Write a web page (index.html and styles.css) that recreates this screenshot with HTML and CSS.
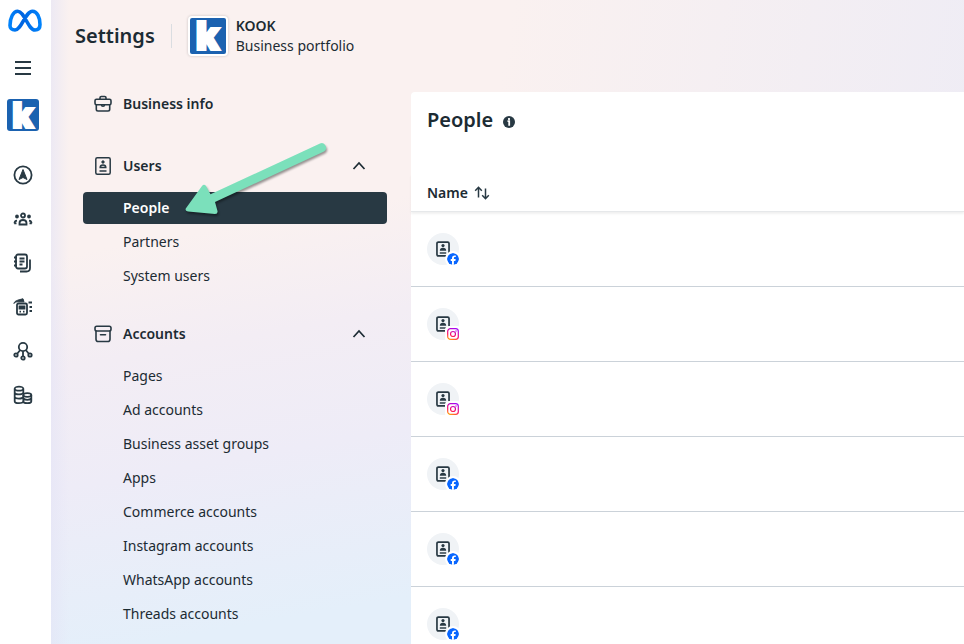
FILE: index.html
```html
<!DOCTYPE html>
<html lang="en">

<head>
    <meta charset="UTF-8">
    <meta name="viewport" content="width=device-width, initial-scale=1.0">
    <title>Settings - People</title>
    <link rel="stylesheet" href="styles.css">
</head>

<body>
    <!-- shared icons -->
    <svg class="sprite" aria-hidden="true">
        <symbol id="chevron" viewBox="0 0 14 10">
            <path d="M1.500 8 7 2l5.500 6" fill="none" stroke="#1c2b33" stroke-width="1.700" />
        </symbol>
        <symbol id="badge" viewBox="0 0 16 18">
            <rect x="1.200" y="1.200" width="13.600" height="15.600" rx="1.500" fill="none" stroke="currentColor" stroke-width="1.900" />
            <circle cx="8" cy="5.200" r="1.800" fill="currentColor" />
            <path d="M4.400 11c0-2.300 1.300-3.400 3.600-3.400s3.600 1.100 3.600 3.400z" fill="currentColor" />
            <path d="M4.400 13.500h7.200" stroke="currentColor" stroke-width="1.600" />
        </symbol>
        <symbol id="facebook" viewBox="0 0 12 12">
            <circle cx="6" cy="6" r="6" fill="#0866ff" />
            <path d="M5 12V7.900H3.700V6.100H5V5.300c0-2 .9-2.900 2.700-2.900.4 0 .8.050 1.100.1v1.600h-.7c-.9 0-1.200.4-1.200 1.200v.8h1.800l-.3 1.800H6.900V12z" fill="#fff" />
        </symbol>
        <symbol id="instagram" viewBox="0 0 12 12">
            <rect x=".7" y=".7" width="10.600" height="10.600" rx="2.600" fill="none" stroke="url(#insta)" stroke-width="1.200" />
            <circle cx="6" cy="6" r="2.500" fill="none" stroke="url(#insta)" stroke-width="1.200" />
            <circle cx="9" cy="3" r=".7" fill="#c013d8" />
        </symbol>
        <linearGradient id="insta" gradientUnits="userSpaceOnUse" x1="2" y1="12" x2="7" y2="0">
            <stop offset="0" stop-color="#ffb800" />
            <stop offset=".4" stop-color="#ff0f5f" />
            <stop offset="1" stop-color="#a307f5" />
        </linearGradient>
    </svg>

    <div class="app">
        <nav class="rail" aria-label="Main">
            <a href="#" class="meta-logo" aria-label="Meta">
                <svg width="34" height="24" viewBox="0 0 34 24">
                    <defs>
                        <linearGradient id="meta">
                            <stop offset="0" stop-color="#0082fb" />
                            <stop offset=".4" stop-color="#0064e0" />
                            <stop offset="1" stop-color="#0082fb" />
                        </linearGradient>
                    </defs>
                    <path d="M2 16.500C2 9 5.200 2.200 9.700 2.200 16.500 2.200 20 21 27 21c3.500 0 5-2.300 5-5.500 0-7.300-3-13.300-7.500-13.300C17.500 2.200 13.500 21 7 21c-3.300 0-5-1.700-5-4.500z" fill="none" stroke="url(#meta)" stroke-width="3.600" />
                </svg>
            </a>
            <button class="menu" aria-label="Menu">
                <svg width="18" height="16" viewBox="0 0 18 16">
                    <path d="M1 2h16M1 8h16M1 14h16" stroke="#283943" stroke-width="2" />
                </svg>
            </button>
            <a href="#" class="logo rail-logo" aria-label="KOOK">k</a>
            <div class="rail-links">
                <a href="#" aria-label="Ads">
                    <svg viewBox="0 0 20 20">
                        <circle cx="10" cy="10" r="8.600" />
                        <path class="fill" d="M10 4.500 14 14.500 10 12.500 6 14.500z" stroke-width="1" />
                    </svg>
                </a>
                <a href="#" aria-label="Audiences">
                    <svg viewBox="0 0 20 20">
                        <circle cx="10" cy="6.500" r="2" />
                        <path d="M6.500 15.500v-1.500c0-2 1.300-3 3.500-3s3.500 1 3.500 3v1.500z" />
                        <circle class="fill" cx="4" cy="7.500" r="1" />
                        <circle class="fill" cx="16" cy="7.500" r="1" />
                        <path d="M1.500 14.300c0-1.600.8-2.500 2.500-2.700M18.500 14.300c0-1.600-.8-2.500-2.500-2.700M1.200 14.300h2.300M16.500 14.300h2.300" />
                    </svg>
                </a>
                <a href="#" aria-label="Posts">
                    <svg viewBox="0 0 20 20">
                        <rect x="3" y="1.500" width="11" height="14" rx="2" />
                        <path d="M1 4.500h3M1 8.500h3M1 12.500h3M6.500 5.500h5M6.500 8.500h5M6.500 11.500h3" />
                        <path d="M17 6.500v8.500c0 2.200-1.200 3.500-3.500 3.500H7" />
                    </svg>
                </a>
                <a href="#" aria-label="Catalog">
                    <svg viewBox="0 0 20 20">
                        <rect x="4" y="6.500" width="10" height="11" rx="1.500" />
                        <path d="M6.500 9.500h5v2h-5zM6.500 14.700h1.500M10 14.700h1.500M15.500 5.500h3.500M16.500 10h2.500M16.500 14h2.500" />
                        <path class="fill" d="M1 6.500C1.500 4 4 3.200 10 1.800l1 3H5.500C3 4.800 2 5 1 6.500z" stroke-width="1" />
                    </svg>
                </a>
                <a href="#" aria-label="Connections">
                    <svg viewBox="0 0 20 20">
                        <circle cx="10" cy="6" r="4.200" />
                        <circle cx="3" cy="14" r="1.700" />
                        <circle cx="10" cy="17" r="1.700" />
                        <circle cx="17" cy="14" r="1.700" />
                        <path d="M10 10.200v5M7 9.300l-2.800 3.500M13 9.300l2.800 3.500" />
                    </svg>
                </a>
                <a href="#" aria-label="Billing">
                    <svg viewBox="0 0 20 20">
                        <ellipse cx="6" cy="3.700" rx="4.300" ry="2" />
                        <path d="M1.700 3.700v12.500c0 1.500 2.200 2 4.300 2s4.300-.5 4.300-2M10.300 3.700v5M1.700 7.800c1 2.200 7.500 2.200 8.600 0M1.700 12c1 2.200 7.500 2.200 8.600 0" />
                        <ellipse cx="14.300" cy="10" rx="4" ry="1.800" />
                        <path d="M10.300 10v6.200c0 1.500 2 2 4 2s4-.5 4-2V10M10.300 13.200c1 2.200 7 2.200 8 0" />
                    </svg>
                </a>
            </div>
        </nav>

        <div class="page">
            <header class="topbar">
                <h1>Settings</h1>
                <div class="portfolio">
                    <div class="logo portfolio-logo" aria-hidden="true">k</div>
                    <div>
                        <strong>KOOK</strong>
                        <span>Business portfolio</span>
                    </div>
                </div>
            </header>

            <div class="content">
                <nav class="sidebar" aria-label="Settings">
                    <a href="#" class="heading">
                        <svg width="18" height="18" viewBox="0 0 18 18" fill="none" stroke="#283943" stroke-width="1.600">
                            <rect x="1" y="4.200" width="16" height="5.500" rx="1.500" />
                            <path d="M2.300 10v4.300c0 1.200.6 1.700 1.700 1.700h10c1.100 0 1.700-.5 1.700-1.700V10M6 4V2.800c0-.9.4-1.300 1.300-1.300h3.400c.9 0 1.300.4 1.300 1.300V4M7.500 9.800c0 2 3 2 3 0" />
                        </svg>
                        Business info
                    </a>

                    <section>
                        <button class="heading" aria-expanded="true">
                            <svg width="18" height="18" viewBox="0 0 18 18" fill="none" stroke="#283943" stroke-width="1.500">
                                <rect x="1.800" y=".8" width="14.400" height="16.400" rx="1.500" />
                                <circle cx="9" cy="5" r="1.200" fill="#283943" stroke-width="1" />
                                <path d="M6.200 10.500c0-1.800 1-2.500 2.800-2.500s2.800.7 2.800 2.500zM5.500 14h7" />
                            </svg>
                            Users
                            <svg class="chevron" width="14" height="10"><use href="#chevron" /></svg>
                        </button>
                        <ul>
                            <li class="active">
                                <a href="#">People</a>
                                <svg class="arrow" width="150" height="80" viewBox="0 0 150 80">
                                    <path d="M137 3.500a4.500 4.500 0 0 1 4 8L32 62 34.500 71q.5 3-2.500 3L5 71.500q-4-1-1.500-4L19 46q2-2.500 4 0l4.500 8.300z" fill="#7be0bb" />
                                </svg>
                            </li>
                            <li><a href="#">Partners</a></li>
                            <li><a href="#">System users</a></li>
                        </ul>
                    </section>

                    <section>
                        <button class="heading" aria-expanded="true">
                            <svg width="18" height="18" viewBox="0 0 18 18" fill="none" stroke="#283943" stroke-width="1.600">
                                <rect x="1" y="1.200" width="16" height="4.800" rx="1.700" />
                                <path d="M2 6v8.200c0 1.600.8 2.300 2.300 2.300h9.400c1.500 0 2.300-.7 2.300-2.300V6M6.500 9.700h5" stroke-linecap="round" />
                            </svg>
                            Accounts
                            <svg class="chevron" width="14" height="10"><use href="#chevron" /></svg>
                        </button>
                        <ul>
                            <li><a href="#">Pages</a></li>
                            <li><a href="#">Ad accounts</a></li>
                            <li><a href="#">Business asset groups</a></li>
                            <li><a href="#">Apps</a></li>
                            <li><a href="#">Commerce accounts</a></li>
                            <li><a href="#">Instagram accounts</a></li>
                            <li><a href="#">WhatsApp accounts</a></li>
                            <li><a href="#">Threads accounts</a></li>
                        </ul>
                    </section>
                </nav>

                <main class="panel">
                    <div class="panel-title">
                        <h2>People</h2>
                        <svg width="12" height="12" viewBox="0 0 12 12" role="img" aria-label="Information">
                            <circle cx="6" cy="6" r="6" fill="#283943" />
                            <path d="M4.500 5.200h1.700v4.600M6 2v1.900" stroke="#fff" stroke-width="1.800" fill="none" />
                        </svg>
                    </div>
                    <table>
                        <thead>
                            <tr>
                                <th scope="col">
                                    <button class="sort">Name
                                        <svg width="16" height="14" viewBox="0 0 16 14" fill="none" stroke="#283943" stroke-width="1.500">
                                            <path d="M4.500 11.500v-10M1.200 4.800l3.300-3.500 3.300 3.500M11.500 2.500v10M8.200 9.200l3.300 3.500 3.300-3.500" />
                                        </svg>
                                    </button>
                                </th>
                            </tr>
                        </thead>
                        <tbody>
                            <tr><td><div class="avatar"><svg class="person"><use href="#badge" /></svg><svg class="source"><use href="#facebook" /></svg></div></td></tr>
                            <tr><td><div class="avatar"><svg class="person"><use href="#badge" /></svg><svg class="source square"><use href="#instagram" /></svg></div></td></tr>
                            <tr><td><div class="avatar"><svg class="person"><use href="#badge" /></svg><svg class="source square"><use href="#instagram" /></svg></div></td></tr>
                            <tr><td><div class="avatar"><svg class="person"><use href="#badge" /></svg><svg class="source"><use href="#facebook" /></svg></div></td></tr>
                            <tr><td><div class="avatar"><svg class="person"><use href="#badge" /></svg><svg class="source"><use href="#facebook" /></svg></div></td></tr>
                            <tr><td><div class="avatar"><svg class="person"><use href="#badge" /></svg><svg class="source"><use href="#facebook" /></svg></div></td></tr>
                        </tbody>
                    </table>
                </main>
            </div>
        </div>
    </div>
</body>

</html>
```
FILE: styles.css
```css
* {
    box-sizing: border-box;
}

body {
    margin: 0;
    font-family: "Noto Sans", "Liberation Sans", sans-serif;
    font-size: 14px;
    line-height: 20px;
    color: #1c2b33;
}

a {
    color: inherit;
    text-decoration: none;
}

button {
    padding: 0;
    border: none;
    background: none;
    font: inherit;
    color: inherit;
    cursor: pointer;
}

svg {
    display: block;
    flex-shrink: 0;
}

h1,
h2 {
    margin: 0;
    font-size: 20px;
    font-weight: 600;
    line-height: 24px;
}

.sprite {
    position: absolute;
    width: 0;
    height: 0;
}

.logo {
    display: block;
    background: #1b62b0;
    color: #fff;
    font-family: Inter, sans-serif;
    font-weight: 900;
    text-align: center;
    -webkit-text-stroke: 2px #fff;
}

.app {
    display: flex;
    height: 100vh;
    overflow: hidden;
}

/* left icon rail */
.rail {
    display: flex;
    flex-direction: column;
    align-items: center;
    width: 51px;
    padding: 9px 5px 0 0;
    flex-shrink: 0;
    background: #fff;
}

.meta-logo {
    padding-left: 4px;
}

.menu {
    margin-top: 27px;
}

.rail-logo {
    width: 32px;
    height: 32px;
    margin-top: 23px;
    border-radius: 3px;
    font-size: 36px;
    line-height: 32px;
}

.rail-links {
    display: flex;
    flex-direction: column;
    gap: 24px;
    margin-top: 34px;
}

.rail-links svg {
    width: 20px;
    height: 20px;
    fill: none;
    stroke: #283943;
    stroke-width: 1.8;
}

.rail-links .fill {
    fill: #283943;
}

.page {
    display: flex;
    flex-direction: column;
    flex: 1;
    min-width: 0;
    background:
        linear-gradient(90deg, rgba(228, 228, 246, 0.6), rgba(228, 228, 246, 0) 18px),
        linear-gradient(100deg, rgba(238, 236, 247, 0) 45%, #eeecf5 95%),
        linear-gradient(170deg, #faf1f0 32%, #f3edf4 46%, #eeecf7 61%, #e4effa 82%);
}

.topbar {
    display: flex;
    align-items: center;
    height: 72px;
    padding-left: 24px;
}

.portfolio {
    display: flex;
    align-items: center;
    gap: 8px;
    margin-left: 16px;
    padding-left: 17px;
    background: linear-gradient(#dadde1, #dadde1) left center / 1px 24px no-repeat;
}

.portfolio-logo {
    width: 40px;
    height: 40px;
    border: 2px solid #fff;
    border-radius: 4px;
    box-shadow: 0 0 3px rgba(0, 0, 0, 0.2);
    font-size: 40px;
    line-height: 36px;
}

.portfolio strong,
.portfolio span {
    display: block;
}

strong {
    font-weight: 600;
}

.content {
    display: flex;
    flex: 1;
    min-height: 0;
}

/* settings menu */
.sidebar {
    width: 360px;
    padding: 12px 24px 0 32px;
    flex-shrink: 0;
}

.heading {
    display: flex;
    align-items: center;
    gap: 11px;
    width: 100%;
    height: 52px;
    padding: 0 21px 0 11px;
    font-weight: 600;
    text-align: left;
}

a.heading {
    height: 40px;
}

.chevron {
    margin-left: auto;
}

.sidebar section {
    margin-top: 16px;
}

.sidebar ul {
    display: flex;
    flex-direction: column;
    gap: 2px;
    margin: 0;
    padding: 0;
    list-style: none;
}

.sidebar li {
    position: relative;
    border-radius: 4px;
}

.sidebar li a {
    display: block;
    padding: 6px 40px;
}

.sidebar .active {
    background: #283943;
    color: #fff;
    font-weight: 600;
}

.arrow {
    position: absolute;
    left: 100px;
    top: -52px;
    filter: drop-shadow(1px 2px 1px rgba(0, 0, 0, 0.4));
    pointer-events: none;
}

/* people list */
.panel {
    flex: 1;
    min-width: 0;
    margin-top: 20px;
    background: #fff;
    border-top-left-radius: 4px;
}

.panel-title {
    display: flex;
    align-items: center;
    gap: 10px;
    padding: 16px 16px 0;
}

.panel-title svg {
    margin-top: 4px;
}

table {
    width: 100%;
    margin-top: 42px;
    border-collapse: separate;
    border-spacing: 0;
}

th {
    height: 38px;
    padding: 0 16px;
    text-align: left;
    font-weight: 600;
    border-bottom: 1px solid #e6e8ea;
    box-shadow: 0 2px 2px rgba(0, 0, 0, 0.06);
}

.sort {
    display: flex;
    align-items: center;
    gap: 6px;
}

td {
    height: 75px;
    padding: 0 16px;
    border-bottom: 1px solid #cbd2d9;
}

.avatar {
    position: relative;
    display: flex;
    align-items: center;
    justify-content: center;
    width: 32px;
    height: 32px;
    border-radius: 50%;
    background: #f0f3f6;
    color: #283943;
}

.person {
    width: 16px;
    height: 16px;
}

.source {
    position: absolute;
    right: -2px;
    bottom: -2px;
    width: 16px;
    height: 16px;
    padding: 2px;
    border-radius: 50%;
    background: #fff;
}

.source.square {
    border-radius: 4px;
}
```
